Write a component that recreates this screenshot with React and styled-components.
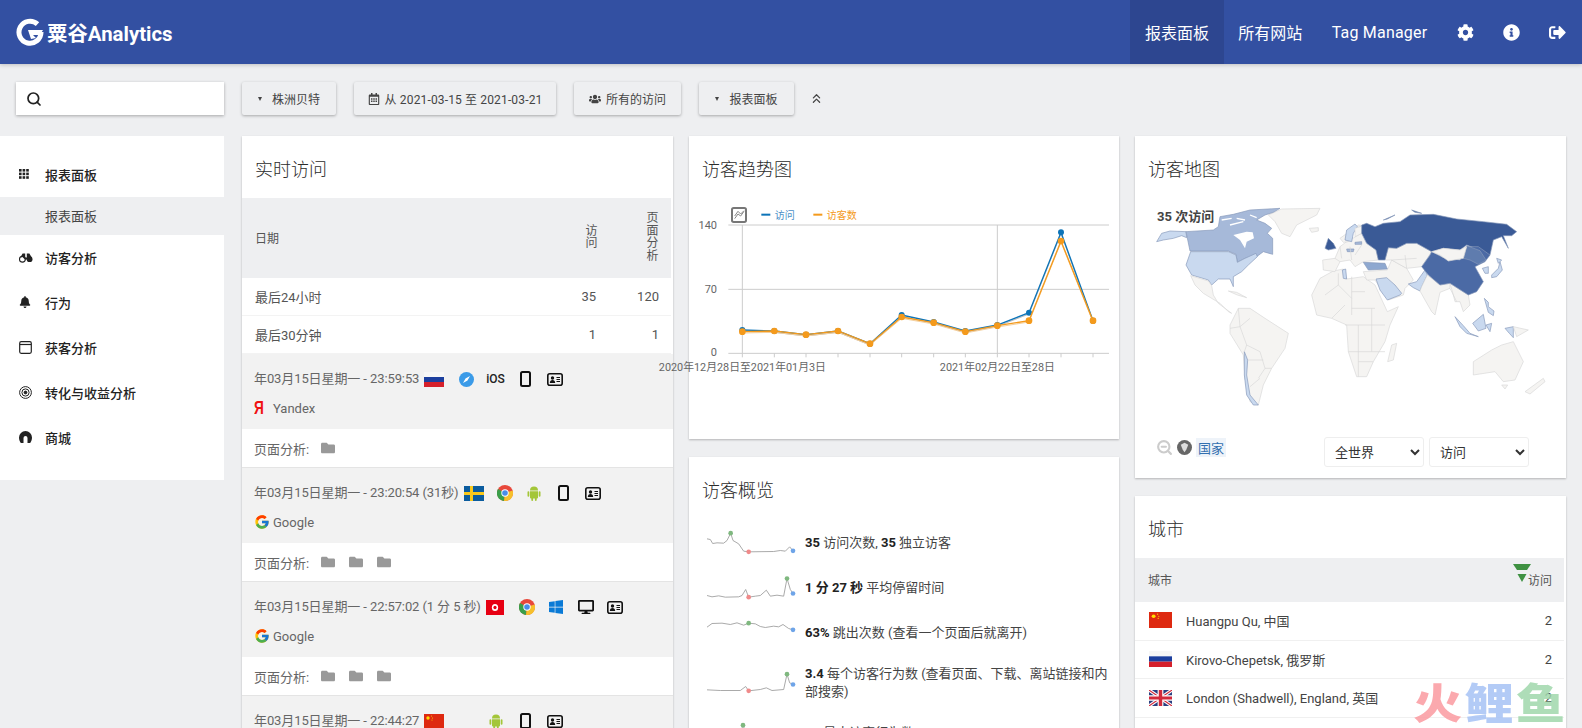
import React from "react";
import styled, { createGlobalStyle } from "styled-components";
import {
  FaBell,
  FaCog,
  FaDesktop,
  FaFolder,
  FaInfoCircle,
  FaRegCalendarAlt,
  FaSignOutAlt,
  FaUsers,
  FaWindows,
} from "react-icons/fa";
import { FcGoogle } from "react-icons/fc";
import { FiSearch, FiZoomOut } from "react-icons/fi";
import { LuChevronsUp } from "react-icons/lu";

const FONT = `Roboto, "Noto Sans CJK SC", sans-serif`;

const GlobalStyle = createGlobalStyle`
  html, body {
    margin: 0;
    height: 728px;
    overflow: hidden;
    background: #eeeff1;
    font-family: ${FONT};
    color: #444;
  }
`;

const Header = styled.header`
  height: 64px;
  background: #3350a2;
  display: flex;
  align-items: stretch;
  justify-content: space-between;
  padding: 0 2px 0 16px;
  box-shadow: 0 1px 4px rgba(0, 0, 0, 0.2);
  color: #fff;
`;

const Brand = styled.div`
  display: flex;
  align-items: center;
  gap: 3px;
  font-size: 20.4px;
  font-weight: 700;
`;

const Nav = styled.nav`
  display: flex;
`;

const NavItem = styled.a`
  display: flex;
  align-items: center;
  justify-content: center;
  font-size: 16px;
  padding: 0 14.7px;
  letter-spacing: ${(p) => (p.$latin ? "0.2px" : "0")};
  background: ${(p) => (p.$active ? "#2d4690" : "transparent")};
`;

const NavIcon = styled.a`
  width: 46px;
  display: flex;
  align-items: center;
  justify-content: center;
  font-size: 17px;
`;

const Toolbar = styled.div`
  display: flex;
  align-items: center;
  padding: 18px 0 21px 16px;
`;

const SearchBox = styled.div`
  width: 208px;
  height: 33px;
  margin-right: 18px;
  padding-left: 10px;
  box-sizing: border-box;
  background: #fff;
  box-shadow: 0 1px 3px rgba(0, 0, 0, 0.3);
  display: flex;
  align-items: center;
  font-size: 16px;
  color: #222;
`;

const ToolGroup = styled.div`
  display: flex;
  gap: 18px;
`;

const ToolButton = styled.button`
  width: ${(p) => p.$w}px;
  height: 33px;
  border: 0;
  border-radius: 2px;
  background: #eeeff1;
  box-shadow: 0 1px 3px rgba(0, 0, 0, 0.3);
  display: flex;
  align-items: center;
  justify-content: center;
  gap: 5px;
  font-family: ${FONT};
  font-size: 12px;
  letter-spacing: ${(p) => (p.$spaced ? "0.15px" : "0")};
  color: #444;
  padding: 0;
`;

const Caret = styled.span`
  width: 0;
  height: 0;
  margin-right: 5px;
  border-left: 2.5px solid transparent;
  border-right: 2.5px solid transparent;
  border-top: 4px solid #444;
`;

const Collapse = styled.span`
  margin-left: 15px;
  display: flex;
  font-size: 15px;
  color: #444;
`;

const Main = styled.div`
  display: flex;
  align-items: flex-start;
`;

const Sidebar = styled.aside`
  width: 224px;
  height: 344px;
  margin-right: 18px;
  padding-top: 16px;
  box-sizing: border-box;
  background: #fff;
`;

const MenuItem = styled.div`
  height: 45px;
  box-sizing: border-box;
  display: flex;
  align-items: center;
  padding: 0 0 1px 19px;
  font-size: 13px;
  font-weight: 500;
  color: #222;
`;

const MenuIcon = styled.span`
  width: 26px;
  display: flex;
  font-size: 12px;
  color: #222;
`;

const SubItem = styled.div`
  height: 38px;
  box-sizing: border-box;
  display: flex;
  align-items: center;
  padding: 0 0 2px 45px;
  background: #eeeff1;
  font-size: 13px;
  color: #444;
`;

const Column = styled.div`
  width: ${(p) => p.$w}px;
  margin-right: 16px;
  flex: none;
  display: flex;
  flex-direction: column;
  gap: 18px;
`;

const Card = styled.section`
  background: #fff;
  box-shadow: 0 1px 2px rgba(0, 0, 0, 0.25);
  height: ${(p) => (p.$h ? `${p.$h}px` : "auto")};
  padding-bottom: ${(p) => p.$pb || 0}px;
`;

const CardTitle = styled.h2`
  margin: 0;
  height: 62px;
  box-sizing: border-box;
  padding: 20px 0 0 13px;
  font-size: 18px;
  line-height: 28px;
  font-weight: 300;
  color: #2c2c2c;
`;

const SummaryHead = styled.div`
  height: 80px;
  margin-right: 2px;
  background: #eeeff1;
  display: grid;
  grid-template-columns: 1fr 63px 63px;
  align-items: center;
  font-size: 12px;
  color: #555;
  padding-left: 13px;
`;

const HeadText = styled.span`
  margin-bottom: 2px;
`;

const VerticalLabel = styled.span`
  justify-self: end;
  margin-right: ${(p) => p.$mr}px;
  margin-bottom: 2px;
  width: 13px;
  line-height: 12.5px;
  text-align: center;
  word-break: break-all;
`;

const SummaryRow = styled.div`
  height: 38px;
  box-sizing: border-box;
  margin-right: 2px;
  display: grid;
  grid-template-columns: 1fr 63px 63px;
  align-items: center;
  font-size: 13px;
  color: #555;
  padding-left: 13px;
  border-bottom: 1px solid #f3f3f3;
`;

const Num = styled.span`
  text-align: right;
  padding-right: 12px;
`;

const VisitHead = styled.div`
  height: 75px;
  box-sizing: border-box;
  padding: 9px 0 0 12px;
  background: #f2f2f2;
  font-size: 13px;
  color: #666;
`;

const VisitLine = styled.div`
  height: ${(p) => p.$h}px;
  display: flex;
  align-items: center;
`;

const DateText = styled.span`
  letter-spacing: -0.1px;
`;

const Slots = styled.div`
  display: flex;
  align-items: center;
  margin: 4px 0 0 ${(p) => p.$gap}px;
`;

const Slot = styled.span`
  width: 29.5px;
  height: 20px;
  display: flex;
  align-items: center;
  justify-content: center;
  color: #111;
  font-size: 16px;
`;

const IosLabel = styled.span`
  font-size: 12px;
  font-weight: 500;
  color: #222;
`;

const ReferrerMark = styled.span`
  width: 19px;
  display: flex;
  font-size: 16px;
`;

const YandexMark = styled.span`
  font-family: "Liberation Sans", sans-serif;
  font-size: 19px;
  font-weight: 700;
  line-height: 18px;
  color: #f01010;
  transform: scaleX(0.72);
  transform-origin: left center;
`;

const VisitFoot = styled.div`
  height: 39px;
  box-sizing: border-box;
  padding-left: 12px;
  border-bottom: 1px solid #e4e4e4;
  display: flex;
  align-items: center;
  font-size: 13px;
  color: #666;
`;

const FolderIcon = styled.span`
  display: flex;
  margin-left: ${(p) => (p.$first ? 12 : 14)}px;
  font-size: 14px;
  color: #999;
`;

const ChartBox = styled.div`
  padding-bottom: 49px;
`;

const ChartSvg = styled.svg`
  display: block;
  overflow: visible;
  font-family: ${FONT};
`;

const OverviewList = styled.div`
  padding-top: 1.5px;
`;

const OverviewRow = styled.div`
  min-height: 45px;
  box-sizing: border-box;
  padding: 9px 9px 9px 18px;
  display: flex;
  align-items: center;
  font-size: 13px;
  line-height: 18.5px;
  color: #444;
  b {
    color: #222;
    font-weight: 700;
  }
`;

const SparkSvg = styled.svg`
  flex: none;
  margin-right: 8px;
  display: block;
`;

const MapArea = styled.div`
  position: relative;
  height: 230px;
`;

const MapSvg = styled.svg`
  display: block;
`;

const MapCount = styled.span`
  position: absolute;
  left: 18px;
  top: 8px;
  padding: 0 4px;
  background: rgba(255, 255, 255, 0.85);
  font-size: 13px;
  font-weight: 700;
  color: #444;
`;

const MapControls = styled.div`
  display: flex;
  align-items: center;
  justify-content: space-between;
  padding: 9px 37px 0 21px;
`;

const MapLegend = styled.div`
  display: flex;
  align-items: center;
  gap: 4px;
  margin-bottom: 10px;
`;

const ZoomOut = styled.span`
  display: flex;
  font-size: 17px;
  color: #ccc;
`;

const RegionLink = styled.span`
  padding: 0 2px;
  font-size: 13px;
  color: #3370b0;
  background: #eef3f9;
`;

const MapSelects = styled.div`
  display: flex;
  gap: 5px;
`;

const MapSelect = styled.select`
  width: 100px;
  height: 30px;
  padding-left: 6px;
  border: 1px solid #eee;
  border-radius: 3px;
  background: #fff;
  font-family: ${FONT};
  font-size: 13px;
  color: #333;
`;

const CityHead = styled.div`
  height: 44px;
  box-sizing: border-box;
  margin-right: 2px;
  padding: 0 12px 1px 13px;
  background: #eeeff1;
  display: flex;
  align-items: center;
  justify-content: space-between;
  font-size: 12px;
  color: #555;
`;

const SortLabel = styled.span`
  position: relative;
`;

const SortMark = styled.svg`
  position: absolute;
  left: -15px;
  top: -7px;
`;

const CityRow = styled.div`
  height: 38.7px;
  box-sizing: border-box;
  margin-right: 2px;
  padding: 0 12px 1px 14px;
  border-bottom: 1px solid #f0f0f0;
  display: flex;
  align-items: center;
  font-size: 13px;
  color: #444;
`;

const CityName = styled.span`
  margin-left: 14px;
  flex: 1;
`;

const Watermark = styled.div`
  position: fixed;
  left: 1413px;
  top: 673px;
  display: flex;
  gap: 2px;
  font-family: "Noto Sans CJK SC", sans-serif;
  font-size: 42px;
  line-height: 56px;
  font-weight: 900;
  pointer-events: none;
  transform: scaleX(1.17);
  transform-origin: left center;
`;

const WaterChar = styled.span`
  color: ${(p) => p.$c};
  opacity: 0.85;
`;

/* drawings */

const LogoMark = () => (
  <svg width="28" height="28" viewBox="0 0 28 28">
    <path
      d="M21.5 6.2A11 11 0 1 0 25 14"
      fill="none"
      stroke="#fff"
      strokeWidth="5"
    />
    <path d="M12 12h15l-3 5h-7l3 3-5 1z" fill="#fff" />
  </svg>
);

const DotsIcon = () => (
  <svg width="10" height="10" viewBox="0 0 10 10" fill="#222">
    {[0, 3.6, 7.2].map((y) =>
      [0, 3.6, 7.2].map((x) => (
        <rect key={`${x}-${y}`} x={x} y={y} width="2.6" height="2.6" />
      ))
    )}
  </svg>
);

const BinocularsIcon = () => (
  <svg width="14" height="11" viewBox="0 0 14 11" fill="#222">
    <circle cx="3.4" cy="7.2" r="2.9" fill="none" stroke="#222" strokeWidth="1.1" />
    <circle cx="10.6" cy="7.2" r="2.9" fill="#222" />
    <path d="M1 6L3.600 1.500H6.200V5.500H7.800V1.500H10.400L13 6 10.600 5 8 7.500H6L3.400 5z" />
  </svg>
);

const WindowIcon = () => (
  <svg width="13" height="13" viewBox="0 0 13 13" fill="none" stroke="#222">
    <rect x="0.7" y="0.7" width="11.6" height="11.6" rx="1.5" strokeWidth="1.2" />
    <path d="M1 3.5h11" strokeWidth="1.2" />
  </svg>
);

const TargetIcon = () => (
  <svg width="13" height="13" viewBox="0 0 13 13" fill="none" stroke="#222">
    <circle cx="6.5" cy="6.5" r="5.9" />
    <circle cx="6.5" cy="6.5" r="3.6" />
    <circle cx="6.5" cy="6.5" r="1.4" fill="#222" />
  </svg>
);

const ArchIcon = () => (
  <svg width="13" height="13" viewBox="0 0 13 13" fill="#222">
    <path d="M0 6.500a6.500 6.500 0 0 1 13 0c0 2.200-.7 4-1.800 5.500H8.500V7a2 2 0 0 0-4 0v5H1.800C.7 10.500 0 8.700 0 6.500z" />
  </svg>
);

const PhoneIcon = () => (
  <svg width="11" height="16" viewBox="0 0 11 16" fill="none">
    <rect x="1" y="1" width="9" height="14" rx="1.5" stroke="#111" strokeWidth="2" />
  </svg>
);

const ContactIcon = () => (
  <svg width="16" height="13" viewBox="0 0 16 13" fill="none">
    <rect x="0.8" y="0.8" width="14.4" height="11.4" rx="2" stroke="#111" strokeWidth="1.6" />
    <circle cx="5.500" cy="5" r="1.700" fill="#111" />
    <path d="M2.800 10c0-2 1.200-3 2.700-3s2.700 1 2.700 3z" fill="#111" />
    <path d="M9.500 4.500h3.500M9.500 6.500h3.500M9.500 8.500h3.500" stroke="#111" />
  </svg>
);

const SafariIcon = () => (
  <svg width="15" height="15" viewBox="0 0 15 15">
    <circle cx="7.500" cy="7.5" r="7.5" fill="#3b9be8" />
    <path d="M11 4L6.500 6.500 4 11l4.500-2.500z" fill="#fff" />
  </svg>
);

const ChromeIcon = () => (
  <svg width="16" height="16" viewBox="0 0 16 16">
    <circle cx="8" cy="8" r="8" fill="#e8483b" />
    <path d="M8 8L1 4a8 8 0 0 0 6 12z" fill="#3a9f4a" />
    <path d="M8 8l7.600-2.500A8 8 0 0 1 7 16z" fill="#f6c02c" />
    <circle cx="8" cy="8" r="3.700" fill="#fff" />
    <circle cx="8" cy="8" r="2.800" fill="#4a8ce8" />
  </svg>
);

const AndroidIcon = () => (
  <svg width="14" height="16" viewBox="0 0 14 16" fill="#a4c639">
    <path d="M3 5.500a4 4 0 0 1 8 0z" />
    <path d="M3 6.200h8v6.300a1 1 0 0 1-1 1H4a1 1 0 0 1-1-1z" />
    <rect x="0.500" y="6.200" width="1.800" height="5.500" rx="0.900" />
    <rect x="11.700" y="6.200" width="1.800" height="5.500" rx="0.900" />
    <rect x="4.300" y="12" width="1.800" height="4" rx="0.900" />
    <rect x="7.900" y="12" width="1.800" height="4" rx="0.900" />
  </svg>
);

const Flag = ({ code, w = 20, h = 15 }) => (
  <svg width={w} height={h} viewBox="0 0 20 15" preserveAspectRatio="none" style={{ flex: "none" }}>
    {code === "ru" && (
      <>
        <rect width="20" height="5" fill="#f7f7f7" />
        <rect y="5" width="20" height="5" fill="#1c3f9e" />
        <rect y="10" width="20" height="5" fill="#d5202b" />
      </>
    )}
    {code === "se" && (
      <>
        <rect width="20" height="15" fill="#0b5c9e" />
        <rect x="6" width="3" height="15" fill="#f8c81c" />
        <rect y="6" width="20" height="3" fill="#f8c81c" />
      </>
    )}
    {code === "tn" && (
      <>
        <rect width="20" height="15" fill="#e70013" />
        <circle cx="10" cy="7.500" r="3.500" fill="#fff" />
        <circle cx="10" cy="7.500" r="1.800" fill="#e70013" />
      </>
    )}
    {code === "cn" && (
      <>
        <rect width="20" height="15" fill="#de2910" />
        <circle cx="4" cy="4" r="1.700" fill="#ffde00" />
        <circle cx="7.500" cy="2" r="0.500" fill="#ffde00" />
        <circle cx="8.500" cy="4" r="0.500" fill="#ffde00" />
        <circle cx="8" cy="6" r="0.500" fill="#ffde00" />
      </>
    )}
    {code === "gb" && (
      <>
        <rect width="20" height="15" fill="#2a3f80" />
        <path d="M0 0L20 15M20 0L0 15" stroke="#fff" strokeWidth="3" />
        <path d="M0 0L20 15M20 0L0 15" stroke="#d22a3c" strokeWidth="1" />
        <path d="M10 0v15M0 7.500h20" stroke="#fff" strokeWidth="5" />
        <path d="M10 0v15M0 7.500h20" stroke="#d22a3c" strokeWidth="3" />
      </>
    )}
  </svg>
);

const SLOT_ICONS = {
  safari: <SafariIcon />,
  chrome: <ChromeIcon />,
  ios: <IosLabel>iOS</IosLabel>,
  android: <AndroidIcon />,
  windows: <FaWindows color="#0a7ad6" />,
  phone: <PhoneIcon />,
  desktop: <FaDesktop />,
  card: <ContactIcon />,
  none: null,
};

const VISITS = [
  { date: "年03月15日星期一 - 23:59:53", flag: "ru", gap: 7, icons: ["safari", "ios", "phone", "card"], ref: "Yandex", folders: 1 },
  { date: "年03月15日星期一 - 23:20:54 (31秒)", flag: "se", gap: 6.5, icons: ["chrome", "android", "phone", "card"], ref: "Google", folders: 3 },
  { date: "年03月15日星期一 - 22:57:02 (1 分 5 秒)", flag: "tn", flagW: 18, gap: 8, icons: ["chrome", "windows", "desktop", "card"], ref: "Google", folders: 3 },
  { date: "年03月15日星期一 - 22:44:27", flag: "cn", gap: 7, icons: ["none", "android", "phone", "card"], ref: "Google", folders: 3 },
];

function Visit({ visit }) {
  return (
    <>
      <VisitHead>
        <VisitLine $h={28}>
          <DateText>{visit.date}</DateText>
          <Slots $gap={5}>
            <Flag code={visit.flag} w={visit.flagW || 20} />
          </Slots>
          <Slots $gap={visit.gap}>
            {visit.icons.map((name, i) => (
              <Slot key={i}>{SLOT_ICONS[name]}</Slot>
            ))}
          </Slots>
        </VisitLine>
        <VisitLine $h={34}>
          <ReferrerMark>
            {visit.ref === "Yandex" ? <YandexMark>Я</YandexMark> : <FcGoogle />}
          </ReferrerMark>
          {visit.ref}
        </VisitLine>
      </VisitHead>
      <VisitFoot>
        页面分析:
        {Array.from({ length: visit.folders }).map((_, i) => (
          <FolderIcon key={i} $first={i === 0}>
            <FaFolder />
          </FolderIcon>
        ))}
      </VisitFoot>
    </>
  );
}

/* trend chart, coordinates are 3x chart units */
const CHART_X = [187, 283, 378, 474, 570, 665, 761, 856, 952, 1047, 1143, 1239];
const BLUE_Y = [420, 423, 434, 423, 461, 375, 396, 423, 405, 368, 127, 392];
const ORANGE_Y = [425, 423, 434, 423, 461, 381, 398, 425, 407, 392, 153, 392];
const toPoints = (ys, dy = 0) => CHART_X.map((x, i) => `${x},${ys[i] + dy}`).join(" ");

function TrendChart() {
  return (
    <ChartSvg width="430" height="192" viewBox="27 24 1290 576">
      <g stroke="#ccc" strokeWidth="3">
        <path d="M145 105H1287M145 298H1287M145 490H1287" />
        <path d="M187 105V490M952 105V490" />
        <path d={CHART_X.map((x) => `M${x} 490v12`).join("")} />
      </g>
      <rect x="156" y="54" width="42" height="42" rx="5" fill="#fff" stroke="#777" strokeWidth="6" />
      <path d="M164 86l10-14 8 6 10-14M164 78l10-14 8 8 10-10" fill="none" stroke="#888" strokeWidth="3" />
      <rect x="244" y="71" width="27" height="6" fill="#0d74b8" />
      <text x="284" y="86" fontSize="30" fill="#4a8fc7">访问</text>
      <rect x="400" y="71" width="27" height="6" fill="#f49a1c" />
      <text x="440" y="86" fontSize="30" fill="#f49a1c">访客数</text>
      <g fontSize="33" fill="#666" textAnchor="end">
        <text x="111" y="116">140</text>
        <text x="111" y="309">70</text>
        <text x="111" y="498">0</text>
      </g>
      <g fontSize="32.500" fill="#666" textAnchor="middle">
        <text x="187" y="544">2020年12月28日至2021年01月3日</text>
        <text x="952" y="544">2021年02月22日至28日</text>
      </g>
      <polyline points={toPoints(BLUE_Y, 4)} fill="none" stroke="#bbb" strokeWidth="3" />
      <polyline points={toPoints(BLUE_Y)} fill="none" stroke="#0d74b8" strokeWidth="4" />
      {CHART_X.map((x, i) => (
        <circle key={x} cx={x} cy={BLUE_Y[i]} r="9" fill="#0d74b8" />
      ))}
      <polyline points={toPoints(ORANGE_Y, 4)} fill="none" stroke="#f4cf9c" strokeWidth="3" />
      <polyline points={toPoints(ORANGE_Y)} fill="none" stroke="#f49a1c" strokeWidth="4" />
      {CHART_X.map((x, i) => (
        <circle key={x} cx={x} cy={ORANGE_Y[i]} r="10" fill="#f49a1c" />
      ))}
    </ChartSvg>
  );
}

/* sparklines, coordinates taken at 3x */
const SPARKS = [
  {
    y: 86.5,
    line: "80,113 90,115 97,127 110,125 130,126 140,118 151,96 158,118 175,128 190,150 205,152 280,151 300,148 315,150 328,137 338,149",
    dots: [[151, 96], [205, 152], [338, 149]],
    html: (
      <>
        <b>35</b> 访问次数, <b>35</b> 独立访客
      </>
    ),
  },
  {
    y: 221.5,
    line: "80,283 95,287 115,284 135,288 175,287 185,283 196,265 205,288 225,285 240,283 258,267 270,285 290,282 310,285 320,232 330,265 338,277",
    dots: [[320, 232], [205, 288], [338, 277]],
    html: (
      <>
        <b>1 分 27 秒</b> 平均停留时间
      </>
    ),
  },
  {
    y: 356.5,
    line: "80,378 95,367 125,366 150,370 170,365 190,372 205,366 225,368 240,376 255,379 280,375 295,377 308,370 325,382 338,386",
    dots: [[205, 366], [338, 386]],
    html: (
      <>
        <b>63%</b> 跳出次数 (查看一个页面后就离开)
      </>
    ),
  },
  {
    y: 506.5,
    line: "80,566 120,568 180,568 196,556 205,569 240,565 258,560 275,568 310,565 320,519 328,545 338,550",
    dots: [[320, 519], [205, 569], [338, 550]],
    html: (
      <>
        <b>3.4</b> 每个访客行为数 (查看页面、下载、离站链接和内部搜索)
      </>
    ),
  },
  {
    y: 653.5,
    line: "80,720 170,722 188,669 200,700 215,730 338,732",
    dots: [[188, 669]],
    html: (
      <>
        <b>12</b> 最大访客行为数
      </>
    ),
  },
];
const DOT_COLORS = ["#7fb87f", "#f08a8a", "#6ea4e8"];

function Spark({ spark }) {
  const colors = spark.dots.length === 2 ? [DOT_COLORS[0], DOT_COLORS[2]] : DOT_COLORS;
  return (
    <SparkSvg width="90" height="27" viewBox={`80 ${spark.y} 270 81`}>
      <polyline points={spark.line} fill="none" stroke="#999" strokeWidth="2.500" />
      {spark.dots.map(([x, y], i) => (
        <circle key={x} cx={x} cy={y} r="7" fill={colors[i]} />
      ))}
    </SparkSvg>
  );
}

/* world map, traced at 3x in three groups with their own origin */
const GREY = "#f5f4f2";
const LIGHT = "#c9d9ef";
const MID = "#a6b9d9";
const DARK = "#3a5a96";

const AMERICAS = [
  [GREY, "355,30 395,12 510,10 500,30 440,60 420,95 395,85 375,50"],
  [LIGHT, "20,110 35,85 60,78 108,80 110,98 95,92 70,100 40,105"],
  [MID, "108,80 190,75 205,65 210,35 250,28 300,15 390,10 370,22 345,30 320,45 345,55 365,70 352,85 368,100 368,148 340,140 320,155 285,160 262,172 258,148 235,138 120,138"],
  ["#ffffff", "250,90 290,80 308,82 312,100 290,110 285,130 270,105"],
  [LIGHT, "122,140 235,140 258,150 262,172 285,160 318,145 322,155 295,180 275,200 250,215 250,245 240,222 205,222 185,240 175,225 125,210 108,180"],
  [GREY, "122,212 175,228 185,242 190,270 205,295 245,325 235,320 210,295 160,265 135,240"],
  [GREY, "235,258 260,262 290,278 262,270"],
  [GREY, "240,360 265,310 300,310 345,340 415,385 405,430 365,490 340,540 325,600 300,590 285,520 280,450 240,385"],
  [LIGHT, "283,440 293,465 290,510 300,570 325,600 310,600 290,570 283,510"],
];
const AMERICAS_LINES =
  "M265,310 L270,365 L240,370 M270,365 L300,340 M270,365 L290,420 L283,440 M290,420 L330,440 L345,490 L365,490 M293,465 L340,465 M345,490 L325,520 M300,545 L330,520";
const ARCTIC_GAPS = "M215,45 l30,-5 M260,40 l25,5 M300,30 l20,8 M240,60 l40,-10";

const EURASIA = [
  [GREY, "28,70 55,68 55,78 35,82"],
  [GREY, "120,125 140,110 185,85 200,115 228,135 235,165 190,170 165,185 150,165 120,170 105,200 70,195 68,165 105,160"],
  [GREY, "120,100 175,60 190,62 165,70 145,110 130,112"],
  [LIGHT, "135,105 140,75 165,57 172,65 160,85 155,110"],
  [GREY, "165,70 190,62 185,85 165,95"],
  [DARK, "75,130 85,100 100,115 108,130 85,135"],
  [MID, "165,112 185,110 185,118 165,118"],
  [MID, "140,132 162,132 160,140 142,140"],
  [GREY, "190,200 262,195 275,165 320,190 340,225 315,250 310,270 265,285 225,225 200,225"],
  [GREY, "265,128 290,130 320,115 350,115 395,140 365,185 320,190 275,165 255,165"],
  ["#8ea8d0", "190,172 255,175 262,192 205,195"],
  [LIGHT, "127,195 137,192 140,222 130,220"],
  [LIGHT, "228,222 260,218 285,240 305,265 300,270 262,285 240,255"],
  [LIGHT, "325,237 350,230 375,195 382,210 365,245 360,258 340,248"],
  [GREY, "360,258 365,245 382,210 420,240 450,235 450,250 420,262 405,330 395,320 375,285"],
  [GREY, "450,235 505,270 510,300 490,320 480,290 465,290 460,270"],
  [DARK, "185,60 200,55 225,65 250,55 300,50 330,30 400,28 470,42 550,50 620,58 650,80 635,92 610,92 625,130 605,95 580,105 570,150 555,165 540,135 500,120 480,135 430,130 395,140 350,115 320,115 290,130 265,128 255,165 235,165 228,135 200,115 185,85"],
  [DARK, "250,45 285,30 262,42"],
  [DARK, "335,15 365,25 345,22"],
  ["#4b6aa5", "365,185 390,150 395,140 430,158 480,165 500,125 535,125 570,150 555,170 525,185 550,230 530,260 505,270 450,235 420,240 385,210"],
  ["#5f7cae", "500,122 540,137 558,165 535,178 510,165 490,160"],
  [GREY, "395,140 430,130 480,135 500,125 490,160 445,168 420,150"],
  [LIGHT, "465,335 490,362 510,385 535,395 500,385 480,365"],
  [LIGHT, "518,355 550,328 558,370 535,378"],
  [LIGHT, "558,360 575,355 570,380"],
  [LIGHT, "615,370 640,365 640,398 628,385"],
  [GREY, "640,365 685,375 650,395"],
  [LIGHT, "553,280 565,292 565,305 582,318 580,332 565,322"],
  [LIGHT, "547,190 565,185 565,205 555,205"],
  [LIGHT, "575,210 595,190 600,170 607,195 590,215 575,218"],
  [LIGHT, "590,160 605,165 595,175"],
];
const EURASIA_LINES =
  "M105,160 L120,170 M120,125 L125,160 M150,125 L155,165 M185,120 L165,150 M320,190 L315,150 M275,165 L350,160 M450,250 L470,290";

const SOUTH = [
  [GREY, "560,300 585,250 625,228 655,222 665,252 715,245 750,270 787,350 820,335 795,390 780,440 745,500 725,545 695,545 670,470 665,390 620,370 575,360"],
  [GREY, "800,450 815,445 805,495 788,500"],
  [GREY, "1045,500 1100,465 1130,450 1165,440 1195,500 1170,555 1135,560 1110,530 1045,540"],
  [GREY, "1130,570 1148,570 1140,582"],
  [GREY, "1200,590 1255,550 1260,560 1215,597"],
];
const SOUTH_LINES =
  "M600 300L640 270L680 310M640 270V235M680 245V360M720 290H680M620 370L660 330M660 390H780M700 390V545M740 340V470M670 470H780M700 500H745M750 340H680";

const Land = ({ items, lines }) => (
  <>
    {items.map(([fill, points]) => (
      <polygon
        key={points}
        points={points}
        fill={fill}
        stroke={fill === GREY ? "#d8d8d8" : fill === "#ffffff" ? "none" : "#8799ba"}
        strokeWidth="2"
        strokeLinejoin="round"
      />
    ))}
    <path d={lines} fill="none" stroke="#d8d8d8" strokeWidth="2" />
  </>
);

function WorldMap() {
  return (
    <MapSvg width="431" height="230" viewBox="30 9 1293 690">
      <g>
        <Land items={SOUTH} lines={SOUTH_LINES} />
      </g>
      <g transform="translate(75 30)">
        <Land items={AMERICAS} lines={AMERICAS_LINES} />
        <path d={ARCTIC_GAPS} fill="none" stroke="#fff" strokeWidth="4" />
      </g>
      <g transform="translate(525 30)">
        <Land items={EURASIA} lines={EURASIA_LINES} />
      </g>
    </MapSvg>
  );
}

const CITIES = [
  { flag: "cn", name: "Huangpu Qu, 中国" },
  { flag: "ru", name: "Kirovo-Chepetsk, 俄罗斯" },
  { flag: "gb", name: "London (Shadwell), England, 英国" },
];

const MENU = [
  { icon: <BinocularsIcon />, label: "访客分析" },
  { icon: <FaBell />, label: "行为" },
  { icon: <WindowIcon />, label: "获客分析" },
  { icon: <TargetIcon />, label: "转化与收益分析" },
  { icon: <ArchIcon />, label: "商城" },
];

export default function App() {
  return (
    <>
      <GlobalStyle />
      <Header>
        <Brand>
          <LogoMark />
          粟谷Analytics
        </Brand>
        <Nav>
          <NavItem $active>报表面板</NavItem>
          <NavItem>所有网站</NavItem>
          <NavItem $latin>Tag Manager</NavItem>
          <NavIcon><FaCog /></NavIcon>
          <NavIcon><FaInfoCircle /></NavIcon>
          <NavIcon><FaSignOutAlt /></NavIcon>
        </Nav>
      </Header>

      <Toolbar>
        <SearchBox><FiSearch strokeWidth={2.6} /></SearchBox>
        <ToolGroup>
          <ToolButton $w={94}><Caret />株洲贝特</ToolButton>
          <ToolButton $w={202} $spaced><FaRegCalendarAlt />从 2021-03-15 至 2021-03-21</ToolButton>
          <ToolButton $w={107}><FaUsers />所有的访问</ToolButton>
          <ToolButton $w={95}><Caret />报表面板</ToolButton>
        </ToolGroup>
        <Collapse><LuChevronsUp /></Collapse>
      </Toolbar>

      <Main>
        <Sidebar>
          <MenuItem><MenuIcon><DotsIcon /></MenuIcon>报表面板</MenuItem>
          <SubItem>报表面板</SubItem>
          {MENU.map((item) => (
            <MenuItem key={item.label}>
              <MenuIcon>{item.icon}</MenuIcon>
              {item.label}
            </MenuItem>
          ))}
        </Sidebar>

        <Column $w={431}>
          <Card>
            <CardTitle>实时访问</CardTitle>
            <SummaryHead>
              <HeadText>日期</HeadText>
              <VerticalLabel $mr={10}>访问</VerticalLabel>
              <VerticalLabel $mr={12}>页面分析</VerticalLabel>
            </SummaryHead>
            <SummaryRow><span>最后24小时</span><Num>35</Num><Num>120</Num></SummaryRow>
            <SummaryRow><span>最后30分钟</span><Num>1</Num><Num>1</Num></SummaryRow>
            {VISITS.map((visit) => (
              <Visit key={visit.date} visit={visit} />
            ))}
          </Card>
        </Column>

        <Column $w={430}>
          <Card $h={303}>
            <CardTitle>访客趋势图</CardTitle>
            <ChartBox><TrendChart /></ChartBox>
          </Card>
          <Card>
            <CardTitle>访客概览</CardTitle>
            <OverviewList>
              {SPARKS.map((spark) => (
                <OverviewRow key={spark.y}>
                  <Spark spark={spark} />
                  <span>{spark.html}</span>
                </OverviewRow>
              ))}
            </OverviewList>
          </Card>
        </Column>

        <Column $w={431}>
          <Card $h={342}>
            <CardTitle>访客地图</CardTitle>
            <MapArea>
              <WorldMap />
              <MapCount>35 次访问</MapCount>
            </MapArea>
            <MapControls>
              <MapLegend>
                <ZoomOut><FiZoomOut strokeWidth={3} /></ZoomOut>
                <svg width="15" height="15" viewBox="0 0 16 16">
                  <circle cx="8" cy="8" r="8" fill="#666" />
                  <path d="M4 5l4-2 4 2-2 5-2 3-2-3z" fill="#ddd" />
                </svg>
                <RegionLink>国家</RegionLink>
              </MapLegend>
              <MapSelects>
                <MapSelect defaultValue="world"><option value="world">全世界</option></MapSelect>
                <MapSelect defaultValue="visits"><option value="visits">访问</option></MapSelect>
              </MapSelects>
            </MapControls>
          </Card>
          <Card $pb={40}>
            <CardTitle>城市</CardTitle>
            <CityHead>
              <span>城市</span>
              <SortLabel>
                <SortMark width="20" height="18" viewBox="0 0 20 18">
                  <path d="M0 0H18L14 6H4z" fill="#3f9142" />
                  <path d="M4.500 10H13.500L9 18z" fill="#3f9142" />
                </SortMark>
                访问
              </SortLabel>
            </CityHead>
            {CITIES.map((city) => (
              <CityRow key={city.name}>
                <Flag code={city.flag} w={23} h={16} />
                <CityName>{city.name}</CityName>
                2
              </CityRow>
            ))}
          </Card>
        </Column>
      </Main>

      <Watermark>
        <WaterChar $c="#fb9aa0">火</WaterChar>
        <WaterChar $c="#a6c2f5">鲤</WaterChar>
        <WaterChar $c="#a0d8ac">鱼</WaterChar>
      </Watermark>
    </>
  );
}
